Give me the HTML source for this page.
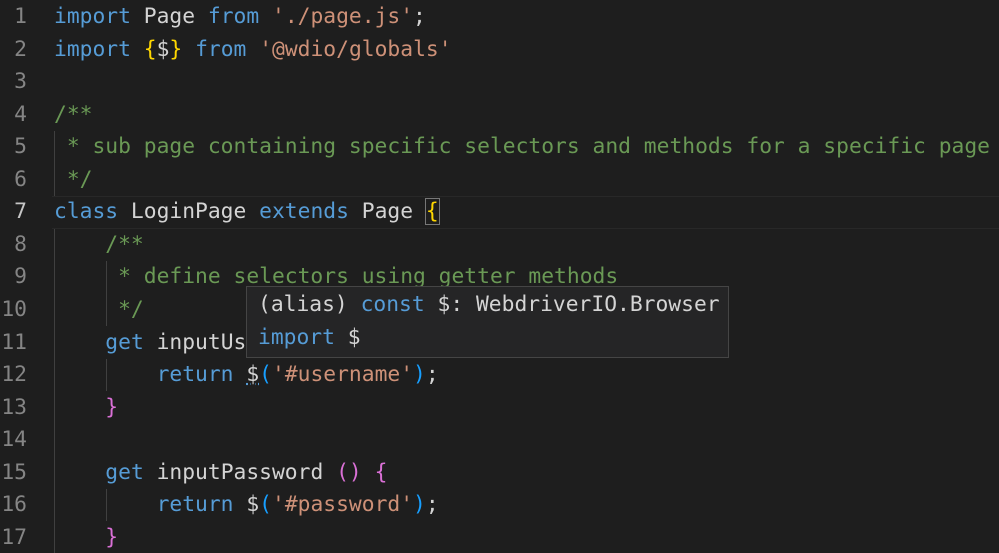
<!DOCTYPE html>
<html><head><meta charset="utf-8"><style>
html,body{margin:0;padding:0;background:#1e1e1e;width:999px;height:553px;overflow:hidden}
body{position:relative;font-family:"DejaVu Sans Mono","Liberation Mono",monospace;font-size:21.3px}
#w{position:absolute;left:0;top:1px;width:999px;height:553px}
.ln{position:absolute;left:0;width:27px;text-align:right;color:#858585;height:32.56px;line-height:32.56px}
.cl{position:absolute;left:54px;white-space:pre;color:#d4d4d4;height:32.56px;line-height:32.56px}
.k{color:#569cd6}.s{color:#ce9178}.c{color:#6a9955}.y{color:#ffd700}.p{color:#da70d6}.b{color:#179fff}
.g{position:absolute;width:1px;background:#404040}
.cur{position:absolute;left:52px;right:0;top:195px;height:31px;border-top:1px solid #282828;border-bottom:1px solid #282828}
.hov{position:absolute;left:246px;top:285px;width:481px;height:70px;background:#252526;border:1px solid #454545}
.hov div{position:absolute;left:11px;white-space:pre;color:#d4d4d4;line-height:32px}
</style></head><body><div id="w">
<div class="cur"></div>
<div class="g" style="left:54px;top:130px;height:65px"></div>
<div class="g" style="left:54px;top:228px;height:325px"></div>
<div class="g" style="left:106px;top:260px;height:65px"></div>
<div class="g" style="left:106px;top:358px;height:32px"></div>
<div class="g" style="left:106px;top:488px;height:32px"></div>

<div class="ln" style="top:0">1</div>
<div class="ln" style="top:32.56px">2</div>
<div class="ln" style="top:65.12px">3</div>
<div class="ln" style="top:97.68px">4</div>
<div class="ln" style="top:130.24px">5</div>
<div class="ln" style="top:162.8px">6</div>
<div class="ln" style="top:195.36px;color:#c6c6c6">7</div>
<div class="ln" style="top:227.92px">8</div>
<div class="ln" style="top:260.48px">9</div>
<div class="ln" style="top:293.04px">10</div>
<div class="ln" style="top:325.6px">11</div>
<div class="ln" style="top:358.16px">12</div>
<div class="ln" style="top:390.72px">13</div>
<div class="ln" style="top:423.28px">14</div>
<div class="ln" style="top:455.84px">15</div>
<div class="ln" style="top:488.4px">16</div>
<div class="ln" style="top:520.96px">17</div>

<div class="cl" style="top:0"><span class="k">import</span> Page <span class="k">from</span> <span class="s">'./page.js'</span>;</div>
<div class="cl" style="top:32.56px"><span class="k">import</span> <span class="y">{</span>$<span class="y">}</span> <span class="k">from</span> <span class="s">'@wdio/globals'</span></div>
<div class="cl c" style="top:97.68px">/**</div>
<div class="cl c" style="top:130.24px"> * sub page containing specific selectors and methods for a specific page</div>
<div class="cl c" style="top:162.8px"> */</div>
<div class="cl" style="top:195.36px"><span class="k">class</span> LoginPage <span class="k">extends</span> Page <span class="y" style="outline:1px solid #777">{</span></div>
<div class="cl c" style="top:227.92px">    /**</div>
<div class="cl c" style="top:260.48px">     * define selectors using getter methods</div>
<div class="cl c" style="top:293.04px">     */</div>
<div class="cl" style="top:325.6px">    <span class="k">get</span> inputUsername <span class="p">()</span> <span class="p">{</span></div>
<div class="cl" style="top:358.16px">        <span class="k">return</span> <span style="text-decoration:underline dotted #569cd6">$</span><span class="b">(</span><span class="s">'#username'</span><span class="b">)</span>;</div>
<div class="cl" style="top:390.72px">    <span class="p">}</span></div>
<div class="cl" style="top:455.84px">    <span class="k">get</span> inputPassword <span class="p">()</span> <span class="p">{</span></div>
<div class="cl" style="top:488.4px">        <span class="k">return</span> $<span class="b">(</span><span class="s">'#password'</span><span class="b">)</span>;</div>
<div class="cl" style="top:520.96px">    <span class="p">}</span></div>

<div class="hov">
<div style="top:2px">(alias) <span class="k">const</span> $: WebdriverIO.Browser</div>
<div style="top:35px"><span class="k">import</span> $</div>
</div>
</div></body></html>
